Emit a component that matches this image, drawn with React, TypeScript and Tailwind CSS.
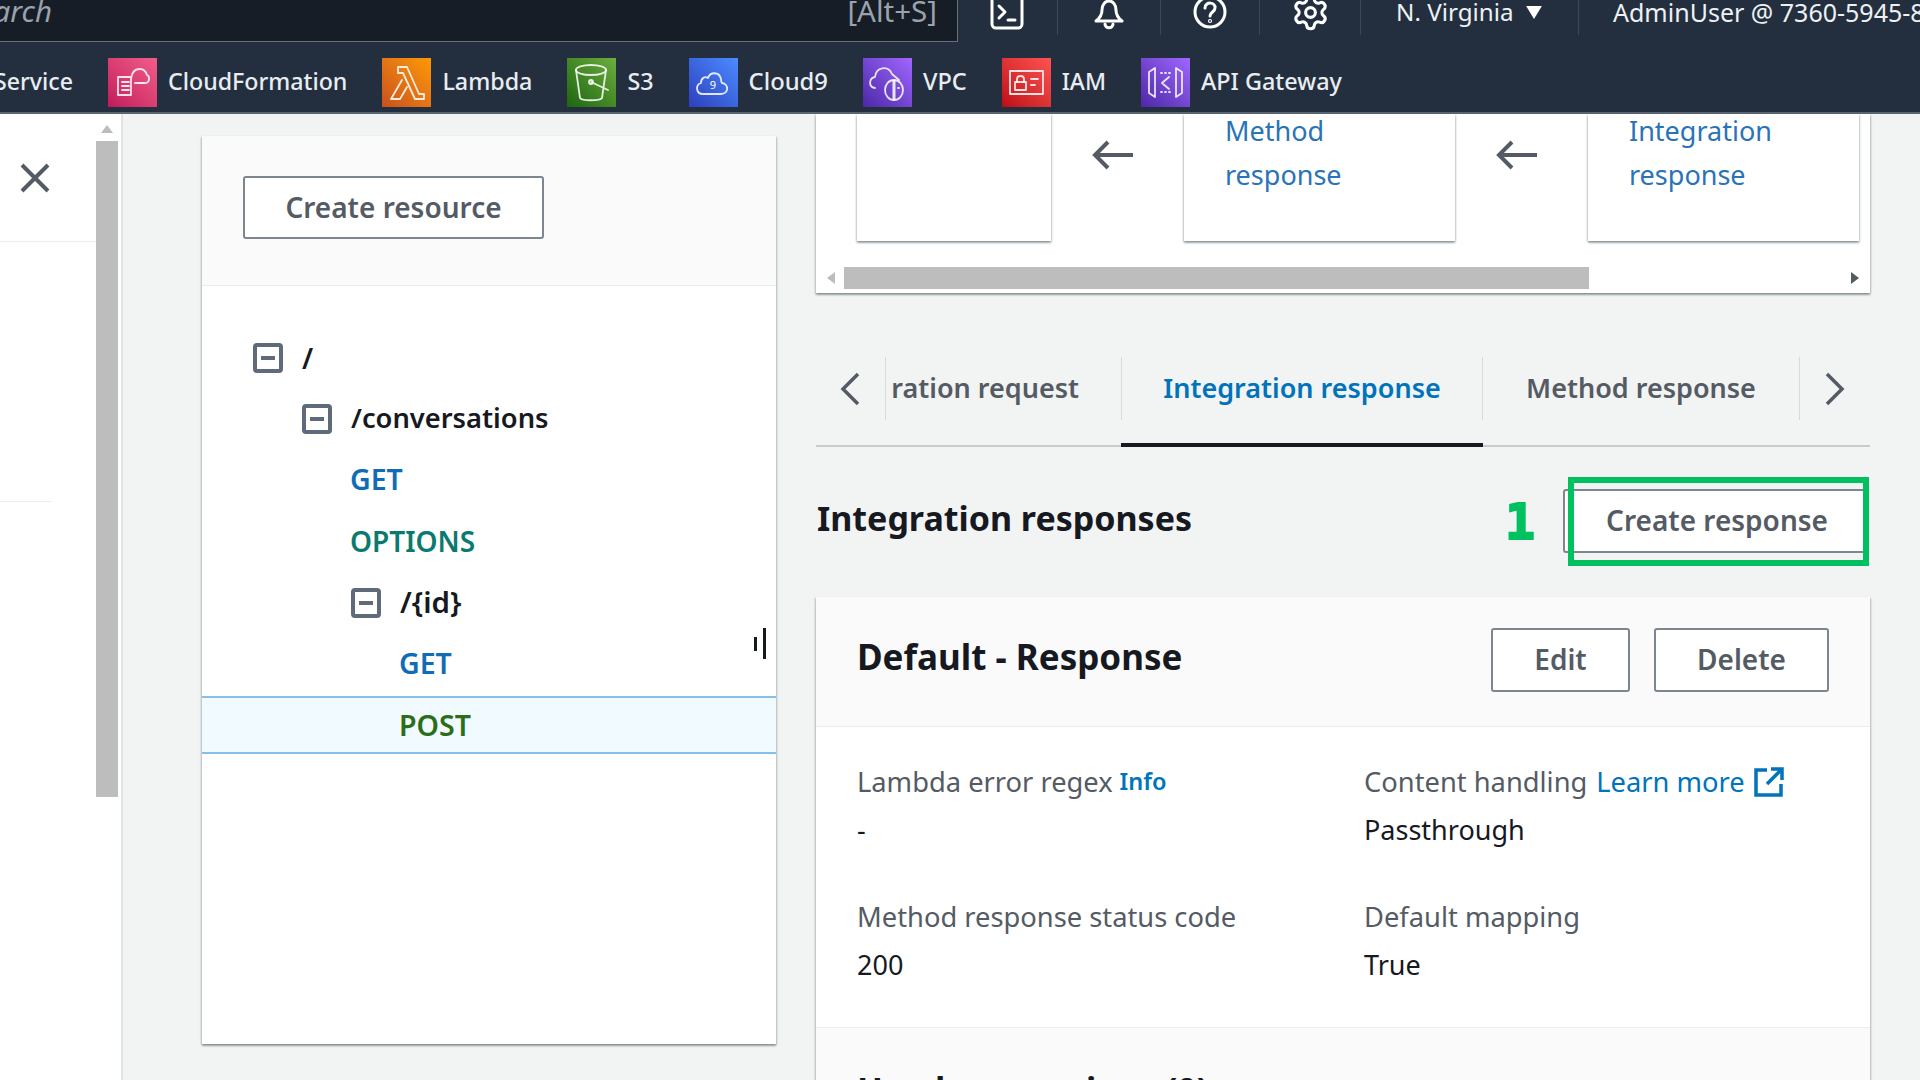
import React from "react";
import { Settings } from "lucide-react";

const cardShadow = "shadow-[0_2px_2px_0_rgba(0,28,36,0.3),1px_1px_2px_0_rgba(0,28,36,0.15),-1px_1px_2px_0_rgba(0,28,36,0.15)]";

function SvcIcon({ cls, children }: { cls: string; children: React.ReactNode }) {
  return (
    <div className={`w-[49px] h-[49px] shrink-0 flex items-center justify-center ${cls}`}>
      <svg viewBox="0 0 49 49" width="49" height="49" fill="none" stroke="#fff" strokeOpacity="0.85" strokeWidth="1.8" strokeLinejoin="round" strokeLinecap="round">
        {children}
      </svg>
    </div>
  );
}

function Svc({ icon, label, size }: { icon: React.ReactNode; label: string; size: string }) {
  return (
    <div className="flex items-center gap-[11px]">
      {icon}
      <span className={`${size} leading-[47px] -mt-[2px] text-[#e8edf2] font-medium whitespace-nowrap`}>{label}</span>
    </div>
  );
}

function Minus() {
  return (
    <svg width="30" height="30" viewBox="0 0 30 30" className="shrink-0">
      <rect x="2" y="2" width="26" height="26" rx="2" fill="#fff" stroke="#5f6b7a" strokeWidth="4" />
      <rect x="8" y="13" width="14" height="4" fill="#5f6b7a" />
    </svg>
  );
}

function TreeRow({ pad, icon, label, cls }: { pad: string; icon?: boolean; label: string; cls: string }) {
  return (
    <div className={`h-[61px] flex items-center ${pad}`}>
      {icon && <Minus />}
      <span className={`font-semibold ${icon ? "ml-[19px]" : ""} ${cls}`}>{label}</span>
    </div>
  );
}

function Arrow() {
  return (
    <svg width="133" height="44" viewBox="0 0 133 44" fill="none" stroke="#545b64" strokeWidth="4" className="shrink-0 mt-[19px]">
      <path d="M82 22H45M57 9 44 22l13 13" />
    </svg>
  );
}

function Btn({ children, cls }: { children: React.ReactNode; cls: string }) {
  return (
    <div className={`flex items-center justify-center pb-[2px] bg-white border-2 border-[#7d868f] rounded-[3px] text-[#545b64] text-[28px] font-semibold ${cls}`}>
      {children}
    </div>
  );
}

function Field({ label, value }: { label: React.ReactNode; value: string }) {
  return (
    <div>
      <div className="h-[48px] flex items-center text-[27.3px] text-[#545b64] whitespace-nowrap">{label}</div>
      <div className="h-[48px] flex items-center text-[27px] text-[#16191f]">{value}</div>
    </div>
  );
}

export default function App() {
  return (
    <div className="w-[1920px] h-[1080px] overflow-hidden bg-[#f2f3f3] flex flex-col" style={{ fontFamily: '"Noto Sans", "Open Sans", sans-serif' }}>
      {/* Top navigation */}
      <header className="h-[114px] shrink-0 bg-[#232f3e] border-b-2 border-[#5a6572] flex flex-col">
        <div className="h-[58px] flex items-start overflow-hidden">
          <div className="w-[958px] h-[42px] shrink-0 bg-[#161d26] border-b border-r border-[#687078] flex justify-between pr-[20px] text-[29.5px] text-[#9aa3ad] leading-[26px] overflow-hidden">
            <span className="italic -ml-[36px] -mt-[2px]">Search</span>
            <span className="-mt-[2px]">[Alt+S]</span>
          </div>
          <div className="w-[100px] h-[35px] shrink-0 flex justify-end pr-[33px] border-r border-[#3a4757]">
            <svg width="34" height="30" viewBox="0 0 34 30" fill="none" stroke="#fff" strokeWidth="3" strokeLinecap="round" strokeLinejoin="round">
              <rect x="2" y="-6" width="30" height="34" rx="4" />
              <path d="M9 6l6 6-6 6M18 20h7" />
            </svg>
          </div>
          <div className="w-[103px] h-[35px] shrink-0 flex justify-center border-r border-[#3a4757]">
            <svg width="34" height="30" viewBox="0 0 34 30" fill="none" stroke="#fff" strokeWidth="3" strokeLinejoin="round" strokeLinecap="round">
              <path d="M4 21c4-3 6-6 6-11 0-5 3-9 7-9s7 4 7 9c0 5 2 8 6 11z" />
              <path d="M13 24c0 5 8 5 8 0" />
            </svg>
          </div>
          <div className="w-[99px] h-[35px] shrink-0 flex justify-center border-r border-[#3a4757] relative">
            <svg width="34" height="30" viewBox="0 0 34 30" fill="none" stroke="#fff" strokeWidth="3" strokeLinecap="round">
              <circle cx="17" cy="12" r="15" />
              <path d="M12 8c0-7 11-6 10 0 0 4-5 4-5 8" />
              <circle cx="17" cy="21" r="0.6" />
            </svg>
          </div>
          <div className="w-[101px] h-[35px] shrink-0 flex justify-center border-r border-[#3a4757]">
            <Settings size={39} strokeWidth={1.9} color="#fff" className="-mt-[7px] shrink-0" />
          </div>
          <div className="w-[218px] h-[35px] shrink-0 border-r border-[#3a4757] flex items-start pl-[35px] text-[24.2px] leading-[24px] text-[#eef1f4] whitespace-nowrap">
            <span>N. Virginia</span>
            <svg width="16" height="13" viewBox="0 0 17 14" className="ml-[12px] mt-[6px]"><path d="M0 0h17l-8.5 14z" fill="#fff" /></svg>
          </div>
          <div className="pl-[34px] text-[25px] leading-[24px] text-[#eef1f4] whitespace-nowrap">AdminUser @ 7360-5945-8</div>
        </div>
        <nav className="h-[49px] flex items-center gap-[35px] whitespace-nowrap">
          <span className="-ml-[6px] text-[23.2px] leading-[47px] -mt-[2px] text-[#e8edf2] font-medium">Service</span>
          <Svc size="text-[23.2px]" label="CloudFormation" icon={
            <SvcIcon cls="bg-linear-to-tr from-[#c2185b] to-[#f25c8a]">
              <path d="M10 19h13v18H10zM14 24h7M14 28h7M14 32h7M23 24c0-7 2-13 9-13 4 0 6 3 7 6 3 1 3 8-2 8H27" />
            </SvcIcon>
          } />
          <Svc size="text-[23.3px]" label="Lambda" icon={
            <SvcIcon cls="bg-linear-to-tr from-[#c8511b] to-[#ff9900]">
              <path d="M16 9h9l12 27h5v5h-9L21 15h-5zM20 22 9 41h9l7-12" />
            </SvcIcon>
          } />
          <Svc size="text-[23.3px]" label="S3" icon={
            <SvcIcon cls="bg-linear-to-tr from-[#1b660f] to-[#6cae3e]">
              <ellipse cx="24" cy="12" rx="15" ry="5" />
              <path d="M9 12l4 28c2 3 20 3 22 0l4-28M24 24l17 8" />
              <circle cx="24" cy="24" r="2" />
            </SvcIcon>
          } />
          <Svc size="text-[23.8px]" label="Cloud9" icon={
            <SvcIcon cls="bg-linear-to-tr from-[#2e3fbf] to-[#4d8bff]">
              <path d="M14 36c-7 0-8-9-2-11 0-5 4-7 7-5 2-6 11-7 13 1 0 2 0 3 1 4 7 1 7 11-1 11z" />
              <text x="24" y="31" fontSize="11" fill="#fff" stroke="none" textAnchor="middle">9</text>
            </SvcIcon>
          } />
          <Svc size="text-[23.5px]" label="VPC" icon={
            <SvcIcon cls="bg-linear-to-tr from-[#4d27a8] to-[#a166ff]">
              <path d="M12 30c-7-1-6-10 0-11 1-10 13-12 17-3l7 6M36 30h-1" />
              <ellipse cx="31" cy="32" rx="9" ry="10" />
              <path d="M31 23v18" strokeWidth="3" />
            </SvcIcon>
          } />
          <Svc size="text-[23px]" label="IAM" icon={
            <SvcIcon cls="bg-linear-to-tr from-[#bd0816] to-[#ff5252]">
              <rect x="8" y="13" width="33" height="23" />
              <rect x="13" y="24" width="11" height="8" />
              <path d="M15 24v-3c0-4 7-4 7 0v3M29 21h7M29 27h4" />
            </SvcIcon>
          } />
          <Svc size="text-[23.4px]" label="API Gateway" icon={
            <SvcIcon cls="bg-linear-to-tr from-[#4d27a8] to-[#a166ff]">
              <path d="M14 10 8 14v21l6 4zM35 10l6 4v21l-6 4zM20 15h1M24 15h1M28 15h1M20 34h1M24 34h1M28 34h1M28 19l-7 6 7 6" />
            </SvcIcon>
          } />
        </nav>
      </header>

      {/* Body */}
      <main className="flex-1 flex min-h-0">
        {/* Side panel */}
        <aside className="w-[96px] shrink-0 bg-white flex flex-col">
          <div className="h-[128px] border-b border-[#eaeded] flex items-start">
            <svg width="30" height="30" viewBox="0 0 30 30" className="ml-[20px] mt-[49px]" fill="none" stroke="#545b64" strokeWidth="4">
              <path d="M2 2l26 26M28 2 2 28" />
            </svg>
          </div>
          <div className="mt-[259px] w-[52px] border-b border-[#eaeded]" />
        </aside>
        <div className="w-[27px] shrink-0 bg-white border-r-2 border-[#dfe3e5] flex flex-col items-center pr-[3px]">
          <svg width="12" height="8" viewBox="0 0 12 8" className="mt-[11px] mb-[8px]"><path d="M6 0l6 8H0z" fill="#bdbdbd" /></svg>
          <div className="w-[22px] h-[656px] bg-[#bdbdbd]" />
        </div>

        {/* Content */}
        <div className="flex-1 flex pl-[79px] gap-[40px] min-w-0">
          {/* Resources card */}
          <section className={`w-[574px] h-[908px] mt-[22px] bg-white flex flex-col shrink-0 relative ${cardShadow}`}>
            <div className="h-[150px] bg-[#fafafa] border-b border-[#eaeded] pl-[41px] pt-[40px] shrink-0">
              <Btn cls="w-[301px] h-[63px]">Create resource</Btn>
            </div>
            <div className="pt-[41px]">
              <TreeRow pad="pl-[51px]" icon label="/" cls="text-[28px] text-[#16191f]" />
              <TreeRow pad="pl-[100px]" icon label="/conversations" cls="text-[27.3px] text-[#16191f]" />
              <TreeRow pad="pl-[148px]" label="GET" cls="text-[28.5px] text-[#0f6cb5]" />
              <TreeRow pad="pl-[148px]" label="OPTIONS" cls="text-[28px] text-[#0b7a6e]" />
              <TreeRow pad="pl-[149px] pt-[2px]" icon label="/{id}" cls="text-[29.5px] text-[#16191f]" />
              <TreeRow pad="pl-[197px] pt-[2px]" label="GET" cls="text-[28.5px] text-[#0f6cb5]" />
              <div className="mt-[3px] h-[58px] pl-[197px] flex items-center bg-[#f1faff] border-y-2 border-[#87bfe8]">
                <span className="text-[28.5px] font-semibold text-[#2a6e1a]">POST</span>
              </div>
            </div>
            {/* I-beam pointer */}
            <div className="absolute left-[552px] top-[501px] w-[3px] h-[14px] bg-[#16191f]" />
            <div className="absolute left-[561px] top-[492px] w-[3px] h-[31px] bg-[#16191f]" />
          </section>

          {/* Right column */}
          <div className="w-[1054px] shrink-0 flex flex-col">
            <section className={`h-[179px] bg-white flex flex-col shrink-0 ${cardShadow}`}>
              <div className="h-[153px] flex pl-[41px] items-start">
                <div className={`w-[194px] h-[127px] bg-white shrink-0 ${cardShadow}`} />
                <Arrow />
                <div className={`w-[271px] h-[127px] bg-white shrink-0 pl-[41px] text-[27px] leading-[44px] text-[#2a73b8] ${cardShadow}`}>
                  <div className="-mt-[5px]">Method</div><div>response</div>
                </div>
                <Arrow />
                <div className={`w-[271px] h-[127px] bg-white shrink-0 pl-[41px] text-[27px] leading-[44px] text-[#2a73b8] ${cardShadow}`}>
                  <div className="-mt-[5px]">Integration</div><div>response</div>
                </div>
              </div>
              <div className="h-[22px] flex items-center">
                <svg width="8" height="12" viewBox="0 0 8 12" className="ml-[11px] mr-[9px]"><path d="M8 0v12L0 6z" fill="#bdbdbd" /></svg>
                <div className="w-[745px] h-[22px] bg-[#bdbdbd]" />
                <div className="flex-1" />
                <svg width="8" height="12" viewBox="0 0 8 12" className="mr-[11px]"><path d="M0 0v12l8-6z" fill="#545b64" /></svg>
              </div>
            </section>

            {/* Tabs */}
            <div className="mt-[64px] h-[90px] border-b-2 border-[#c6cccc] flex shrink-0 text-[27px] font-semibold">
              <div className="w-[69px] h-[63px] flex items-center justify-center pr-[2px]">
                <svg width="20" height="34" viewBox="0 0 20 34" fill="none" stroke="#545b64" strokeWidth="3.5"><path d="M18 2 3 17l15 15" /></svg>
              </div>
              <div className="w-[236px] h-[63px] border-l border-[#d5dbdb] flex items-center justify-end pr-[42px] text-[#545b64] whitespace-nowrap">
                <div className="w-[189px] overflow-hidden flex justify-end"><span className="shrink-0">Integration request</span></div>
              </div>
              <div className="w-[362px] h-[90px] border-b-4 border-[#16191f] shrink-0">
                <div className="h-[63px] border-x border-[#d5dbdb] flex items-center justify-center text-[#0073bb]">Integration response</div>
              </div>
              <div className="w-[317px] h-[63px] flex items-center justify-center text-[#545b64] border-r border-[#d5dbdb]">Method response</div>
              <div className="flex-1 h-[63px] flex items-center justify-center">
                <svg width="20" height="34" viewBox="0 0 20 34" fill="none" stroke="#545b64" strokeWidth="3.5"><path d="M2 2l15 15L2 32" /></svg>
              </div>
            </div>

            {/* Heading */}
            <div className="h-[150px] shrink-0 flex items-start pt-[42px]">
              <h2 className="text-[34px] font-bold text-[#16191f] leading-[58px] pl-[1px] flex-1">Integration responses</h2>
              <span className="text-[50px] font-bold text-[#00c060] leading-[60px] mt-[3px] mr-[28px] [-webkit-text-stroke:2px_#00c060]" style={{ fontFamily: '"DejaVu Sans Mono", monospace' }}>1</span>
              <div className="relative w-[306px] mr-[1px]">
                <Btn cls="w-full h-[64px] border-r-0 rounded-r-none">Create response</Btn>
                <div className="absolute left-[5px] right-0 -top-[12px] -bottom-[13px] border-[6px] border-[#00c060]" />
              </div>
            </div>

            {/* Default card */}
            <section className={`flex flex-col shrink-0 ${cardShadow}`}>
              <div className="h-[130px] bg-[#fafafa] border-b border-[#eaeded] flex items-start justify-between px-[41px] pt-[31px]">
                <h3 className="text-[35px] font-bold text-[#16191f] leading-[58px]">Default - Response</h3>
                <div className="flex gap-[24px]">
                  <Btn cls="w-[139px] h-[64px]">Edit</Btn>
                  <Btn cls="w-[175px] h-[64px]">Delete</Btn>
                </div>
              </div>
              <div className="h-[301px] bg-white border-b border-[#eaeded] pl-[41px] pt-[31px] grid grid-cols-[507px_1fr] gap-y-[39px] content-start">
                <Field label={<>Lambda error regex <span className="ml-[7px] text-[23.5px] font-semibold text-[#0073bb]">Info</span></>} value="-" />
                <Field label={<>Content handling <span className="ml-[9px] text-[#0073bb]">Learn more</span>
                  <svg width="30" height="30" viewBox="0 0 30 30" fill="none" stroke="#0073bb" strokeWidth="3.5" className="ml-[9px]"><path d="M13 3H2v25h25V17M17 2h11v11M28 2 13 17" /></svg></>} value="Passthrough" />
                <Field label="Method response status code" value="200" />
                <Field label="Default mapping" value="True" />
              </div>
              <div className="h-[60px] bg-[#fafafa] pl-[41px] pt-[39px]">
                <div className="text-[34px] font-bold text-[#16191f] leading-[44px]">Header mappings (0)</div>
              </div>
            </section>
          </div>
        </div>
      </main>
    </div>
  );
}
